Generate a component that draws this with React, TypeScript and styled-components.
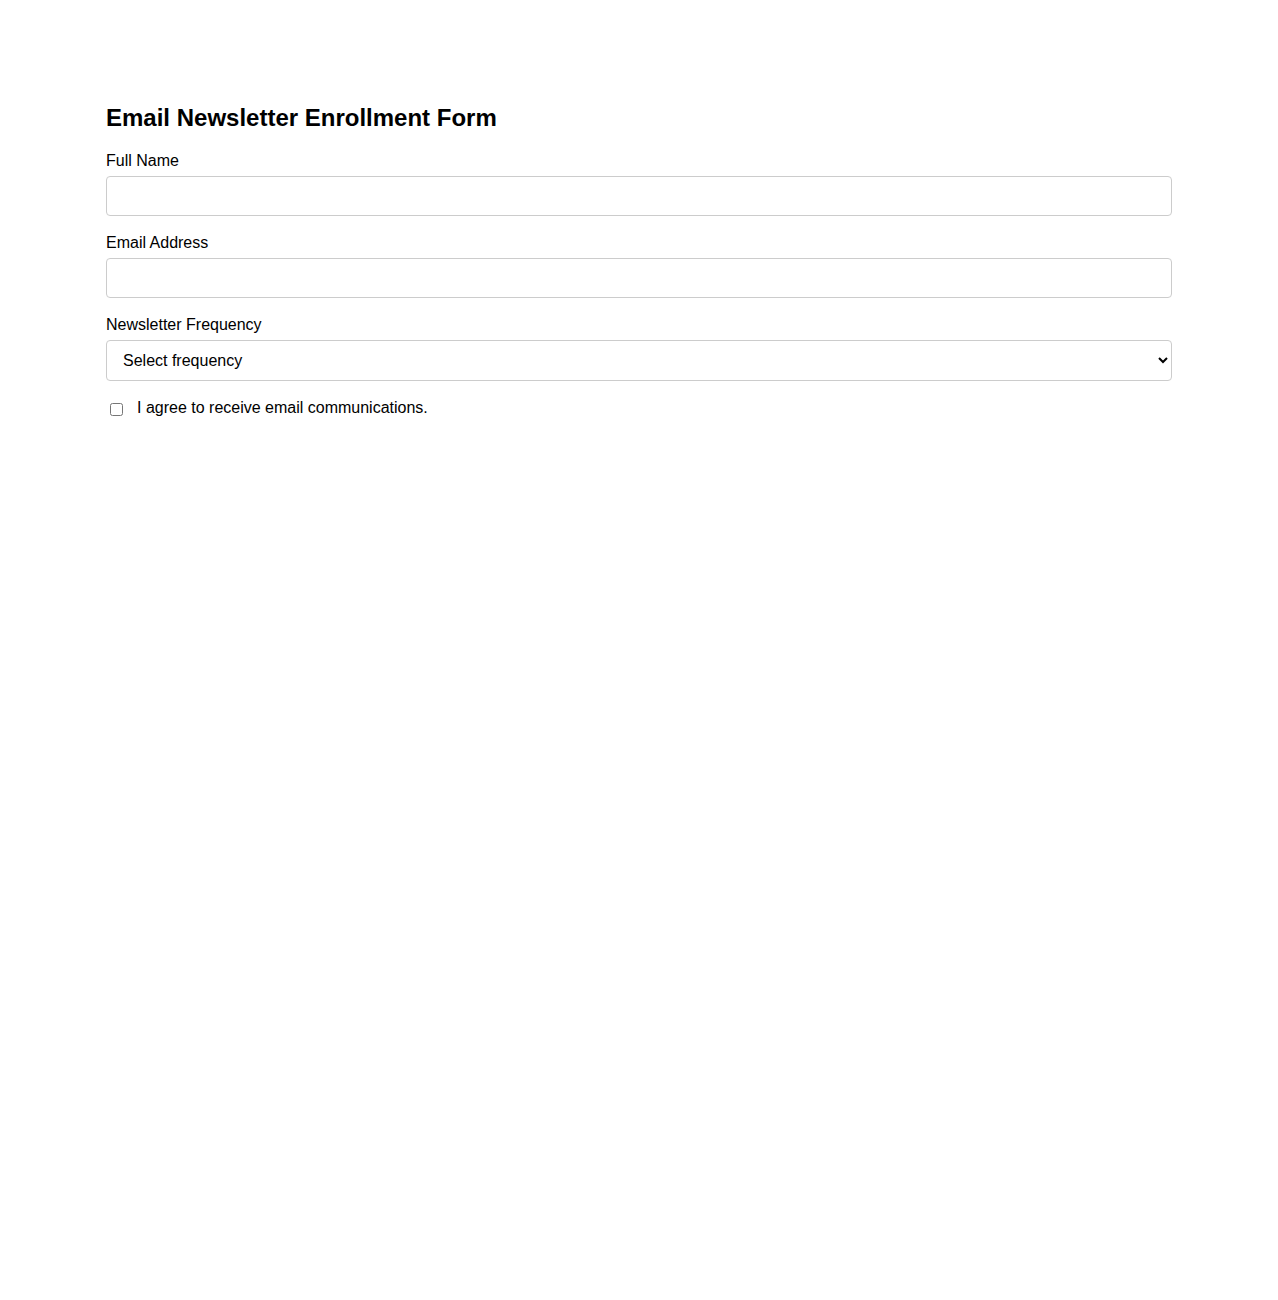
import React, { FC, useState } from 'react'
import styled, { createGlobalStyle } from 'styled-components'

const GlobalStyle = createGlobalStyle`
	body {
		margin: 0;
		background: #ffffff;
		font-family: 'Liberation Sans', Arial, sans-serif;
		color: #000000;
	}
`

const Page = styled.div`
	max-width: 1066px;
	margin: 0 auto;
	padding-top: 104px;
`

const Title = styled.h2`
	font-size: 24px;
	font-weight: bold;
	margin: 0 0 20px;
	line-height: 28px;
`

const Field = styled.div`
	display: flex;
	flex-direction: column;
	margin-bottom: 18px;
`

const Label = styled.label`
	font-size: 16px;
	line-height: 18px;
	margin-bottom: 6px;
`

const TextInput = styled.input`
	height: 40px;
	box-sizing: border-box;
	padding: 10px;
	font-size: 16px;
	font-family: inherit;
	border: 1px solid #cccccc;
	border-radius: 4px;
	outline: none;
`

const Select = styled.select`
	height: 41px;
	box-sizing: border-box;
	padding: 10px 12px;
	font-size: 16px;
	font-family: inherit;
	color: #000000;
	background: #ffffff;
	border: 1px solid #cccccc;
	border-radius: 4px;
	outline: none;
`

const CheckRow = styled.label`
	display: flex;
	align-items: center;
	font-size: 16px;
	line-height: 18px;
`

const Checkbox = styled.input`
	margin: 3px 14px 0 4px;
`

const App: FC = () => {
	const [agreed, setAgreed] = useState(false)

	return (
		<Page>
			<GlobalStyle />
			<Title>Email Newsletter Enrollment Form</Title>
			<form onSubmit={(e) => e.preventDefault()}>
				<Field>
					<Label htmlFor="fullName">Full Name</Label>
					<TextInput id="fullName" type="text" />
				</Field>
				<Field>
					<Label htmlFor="email">Email Address</Label>
					<TextInput id="email" type="email" />
				</Field>
				<Field>
					<Label htmlFor="frequency">Newsletter Frequency</Label>
					<Select id="frequency" defaultValue="">
						<option value="">Select frequency</option>
						<option value="daily">Daily</option>
						<option value="weekly">Weekly</option>
						<option value="monthly">Monthly</option>
					</Select>
				</Field>
				<CheckRow>
					<Checkbox type="checkbox" checked={agreed} onChange={() => setAgreed(!agreed)} />
					I agree to receive email communications.
				</CheckRow>
			</form>
		</Page>
	)
}

export default App
